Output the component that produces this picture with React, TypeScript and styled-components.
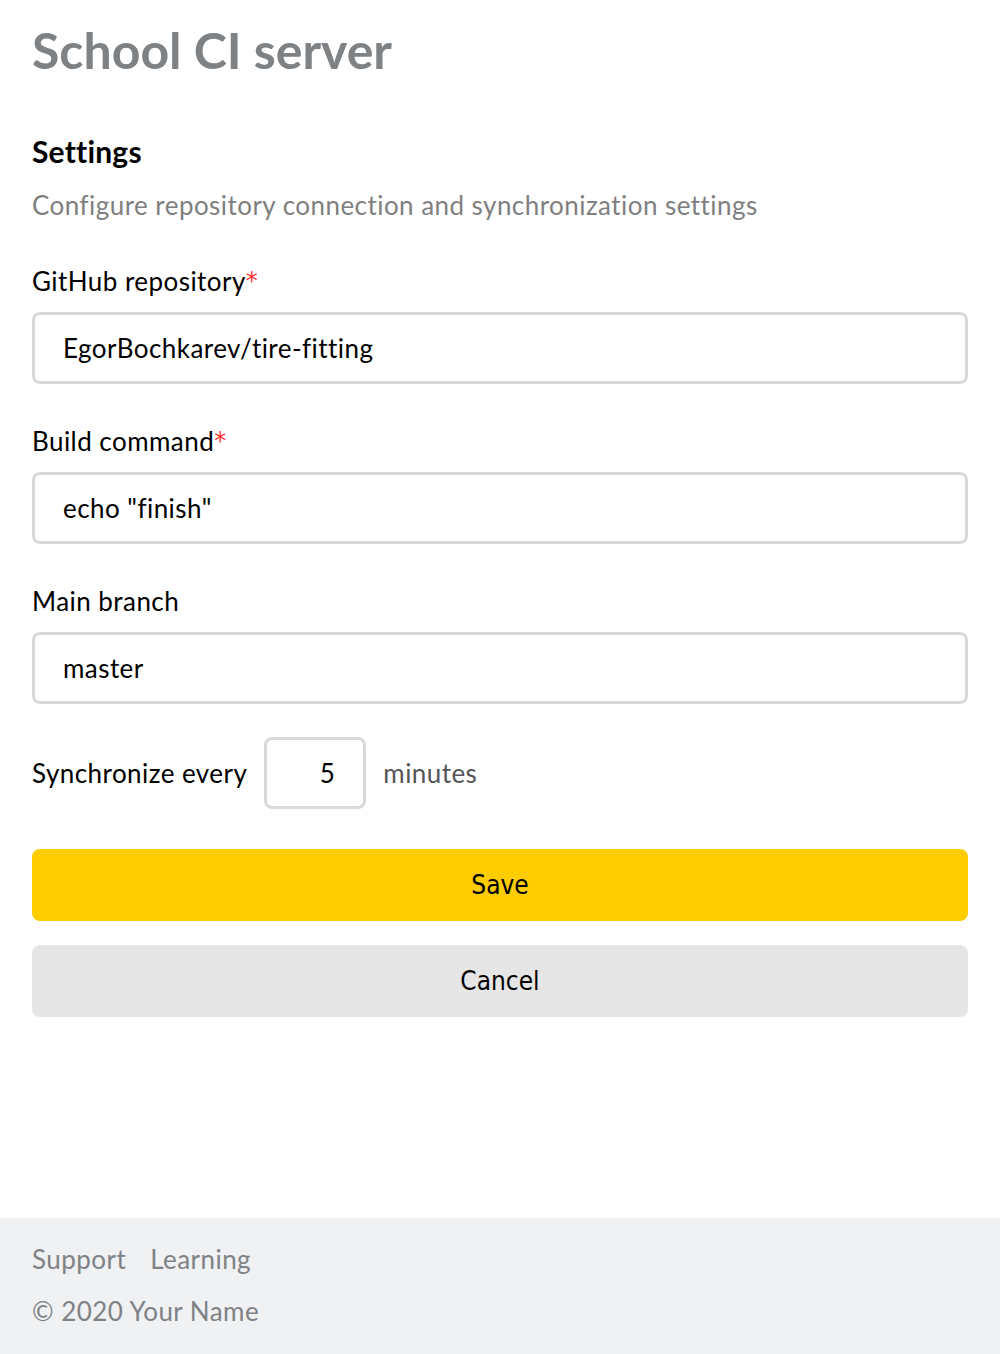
import React, { useState } from 'react'
import styled, { createGlobalStyle } from 'styled-components'

const GlobalStyle = createGlobalStyle`
	html, body {
		margin: 0;
		padding: 0;
		background: #fff;
	}
	body {
		font-family: Lato, "Noto Sans", sans-serif;
		font-variant-ligatures: none;
		letter-spacing: 0.45px;
		color: #000;
	}
	* {
		box-sizing: border-box;
	}
`

const Page = styled.div`
	display: flex;
	flex-direction: column;
	min-height: 100vh;
`

const Main = styled.main`
	flex: 1;
	padding: 0 32px;
`

const Title = styled.h1`
	margin: 0;
	padding-top: 20px;
	font-size: 50px;
	line-height: 60px;
	font-weight: 700;
	letter-spacing: 0;
	color: #7f8285;
`

const Heading = styled.h2`
	margin: 53px 0 0;
	font-size: 30px;
	line-height: 36px;
	font-weight: 700;
	letter-spacing: 0.2px;
`

const Subtitle = styled.p`
	margin: 18px 0 0;
	font-size: 26px;
	line-height: 36px;
	color: #7f7f7f;
`

const Form = styled.form`
	display: flex;
	flex-direction: column;
	margin-top: 40px;
`

const Field = styled.div`
	display: flex;
	flex-direction: column;
	gap: 13px;
	margin-bottom: 39px;
`

const Label = styled.label`
	font-size: 26px;
	line-height: 36px;
`

const Required = styled.span`
	color: #f33;
	font-family: "DejaVu Sans", sans-serif;
	font-size: 24px;
	vertical-align: 2px;
`

const Input = styled.input<{ $align?: 'left' | 'right' }>`
	height: 72px;
	width: 100%;
	padding: 0 28px;
	border: 3px solid #d9d9d9;
	border-radius: 8px;
	font-family: Lato, "Noto Sans", sans-serif;
	font-variant-ligatures: none;
	letter-spacing: 0.45px;
	font-size: 26px;
	color: #000;
	text-align: ${(p) => p.$align || 'left'};
	outline: none;
`

const SyncRow = styled.div`
	display: flex;
	align-items: center;
	gap: 17px;
	margin-top: -6px;
	font-size: 26px;
`

const SmallInput = styled(Input)`
	width: 102px;
	padding: 0 28px;
`

const Muted = styled.span`
	color: #555;
`

const Buttons = styled.div`
	display: flex;
	flex-direction: column;
	gap: 24px;
	margin-top: 40px;
`

const Button = styled.button<{ $primary?: boolean }>`
	height: 72px;
	width: 100%;
	border: none;
	border-radius: 8px;
	background: ${(p) => (p.$primary ? '#ffcc00' : '#e6e6e6')};
	font-family: "DejaVu Sans Condensed", "DejaVu Sans", sans-serif;
	font-stretch: condensed;
	font-size: 26px;
	color: #000;
	cursor: pointer;
`

const Footer = styled.footer`
	margin-top: 80px;
	padding: 15px 32px 17px;
	background: #f0f1f3;
	color: #7f8285;
	font-size: 26px;
	line-height: 52px;
`

const FooterLinks = styled.nav`
	display: flex;
	gap: 24px;
`

const FooterLink = styled.a`
	color: inherit;
	text-decoration: none;
`

export default function App() {
	const [repo, setRepo] = useState('EgorBochkarev/tire-fitting')
	const [command, setCommand] = useState('echo "finish"')
	const [branch, setBranch] = useState('master')
	const [period, setPeriod] = useState('5')

	return (
		<>
			<GlobalStyle />
			<Page>
				<Main>
					<Title>School CI server</Title>
					<Heading>Settings</Heading>
					<Subtitle>Configure repository connection and synchronization settings</Subtitle>
					<Form onSubmit={(e) => e.preventDefault()}>
						<Field>
							<Label htmlFor="repo">GitHub repository<Required>*</Required></Label>
							<Input id="repo" value={repo} onChange={(e) => setRepo(e.target.value)} />
						</Field>
						<Field>
							<Label htmlFor="command">Build command<Required>*</Required></Label>
							<Input id="command" value={command} onChange={(e) => setCommand(e.target.value)} />
						</Field>
						<Field>
							<Label htmlFor="branch">Main branch</Label>
							<Input id="branch" value={branch} onChange={(e) => setBranch(e.target.value)} />
						</Field>
						<SyncRow>
							<label htmlFor="period">Synchronize every</label>
							<SmallInput id="period" $align="right" value={period} onChange={(e) => setPeriod(e.target.value)} />
							<Muted>minutes</Muted>
						</SyncRow>
						<Buttons>
							<Button type="submit" $primary>Save</Button>
							<Button type="button">Cancel</Button>
						</Buttons>
					</Form>
				</Main>
				<Footer>
					<FooterLinks>
						<FooterLink href="#">Support</FooterLink>
						<FooterLink href="#">Learning</FooterLink>
					</FooterLinks>
					<div>© 2020 Your Name</div>
				</Footer>
			</Page>
		</>
	)
}
